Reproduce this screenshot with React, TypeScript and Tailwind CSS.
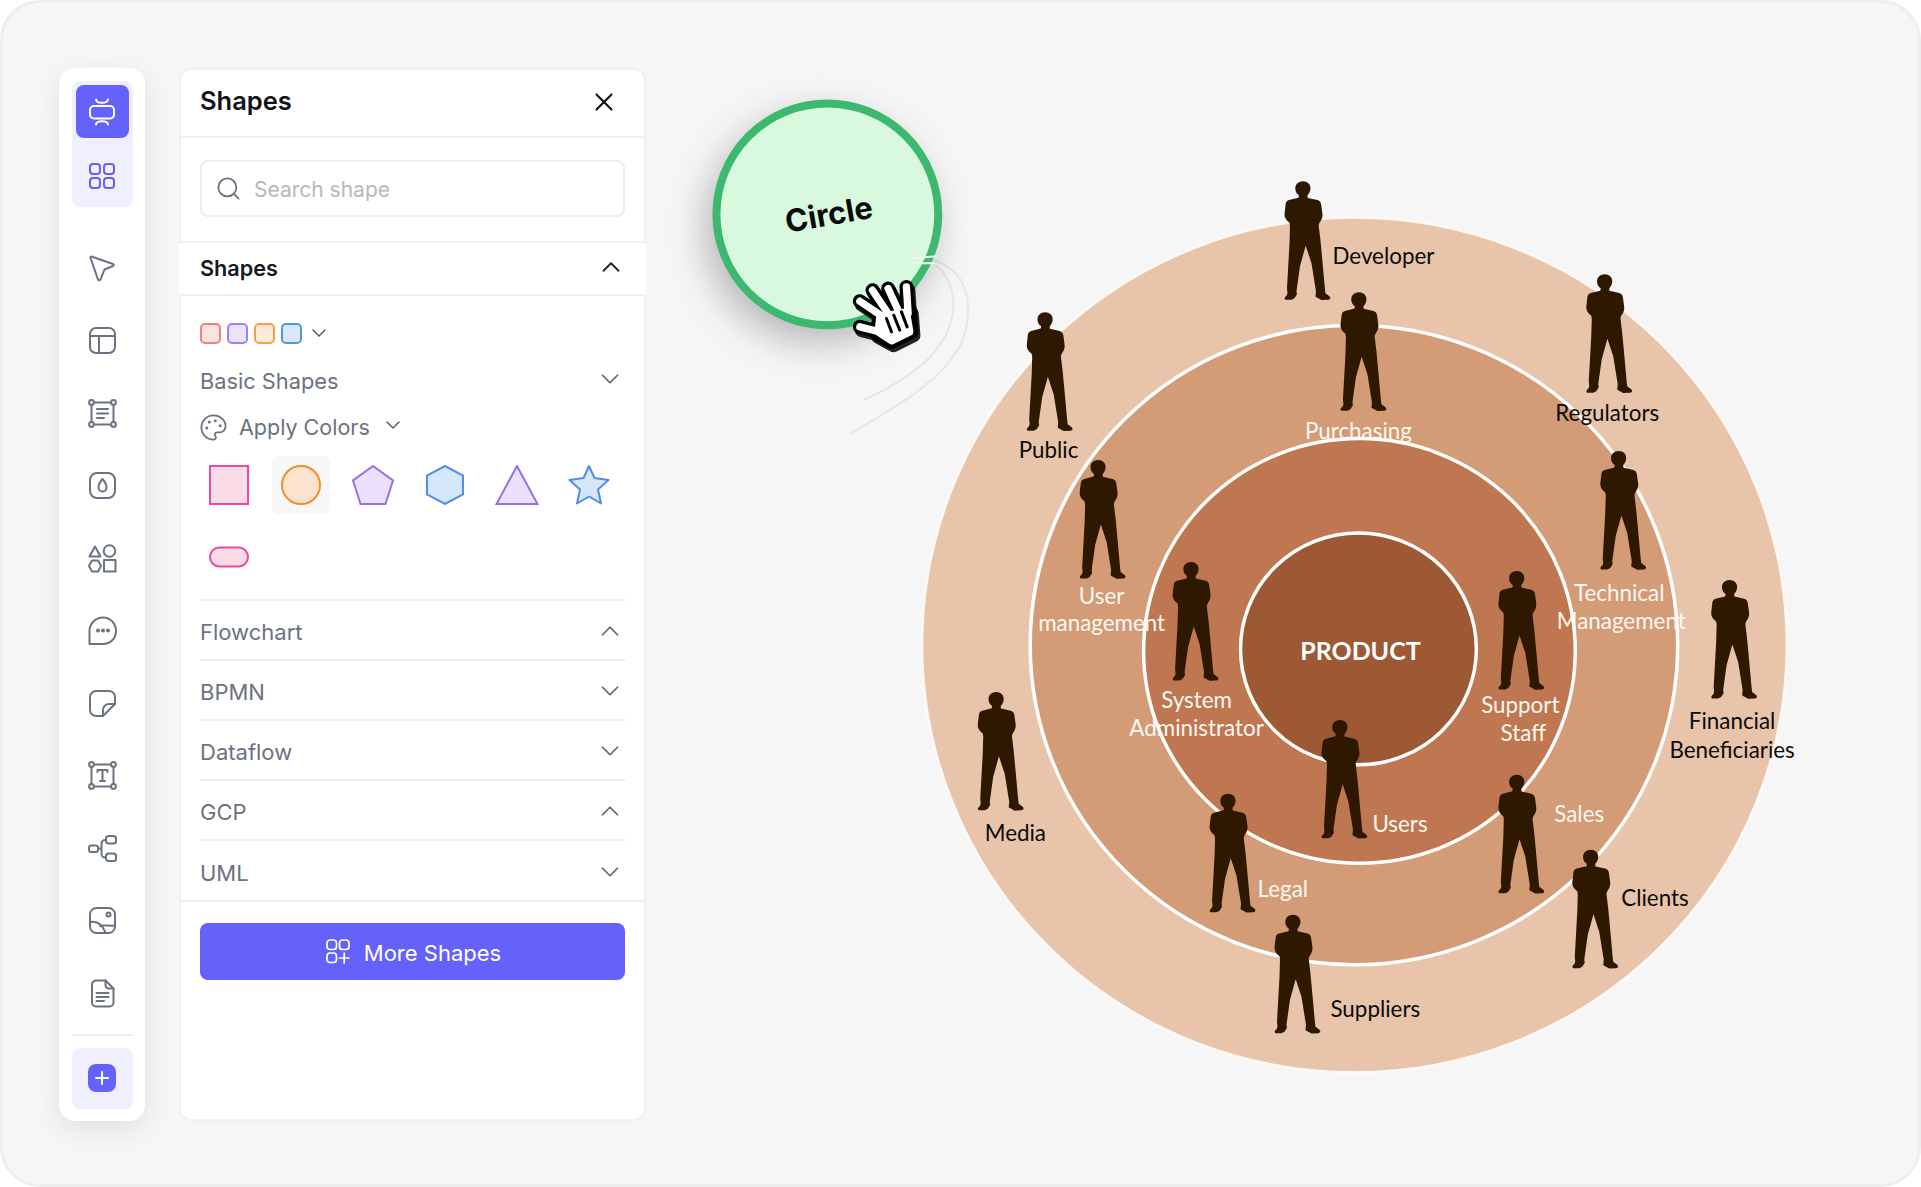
import { ChevronDown, ChevronUp, Palette, Search, X } from "lucide-react";

const PERSON =
  "M18.5 0C23 0 26 3 26 7C26 10 24.5 12.5 23 14L23.2 16.6L33 18.8C35.5 19.4 36.5 21 36.8 24L38 33C38.2 36 37 39 35 41.5L34.2 44L36 59L37.5 75L40.5 108L41 112L45 115C46.5 116.5 46 118 44 118.5L37 118.8L31 115.5L31.5 110L27 82L21.2 64.5L15.5 85L12 110L12.5 113L10 117L7 118.5L1 118.5C-0.5 117.5 0 116 2 114.5L3 112L2.5 107L4 80L5 62L5.5 44.5L5 41.5C1.5 39 0 36 0 33L1 24C1.2 21 2 19.5 4.5 18.8L14 16.4L14.5 14C12 12.5 10.8 10 10.8 7C10.8 3 14 0 18.5 0Z";

const people: [number, number][] = [
  [1284, 181], [1340, 292], [1026, 312], [1079, 460], [1172, 562], [1586, 274], [1600, 451], [1498, 571],
  [1711, 580], [1321, 720], [977, 692], [1209, 794], [1498, 775], [1572, 850], [1274, 915],
];

type Label = { t: string; x: number; y: number; a?: "middle" | "start"; c: string };
const W = "#fdf7f2";
const K = "#0b0b0b";
const labels: Label[] = [
  { t: "Developer", x: 1332, y: 264, c: K },
  { t: "Public", x: 1018, y: 458, c: K },
  { t: "User", x: 1101, y: 604, a: "middle", c: W },
  { t: "management", x: 1101, y: 631, a: "middle", c: W },
  { t: "Regulators", x: 1607, y: 421, a: "middle", c: K },
  { t: "Technical", x: 1619, y: 601, a: "middle", c: W },
  { t: "Management", x: 1621, y: 629, a: "middle", c: W },
  { t: "Support", x: 1520, y: 713, a: "middle", c: W },
  { t: "Staff", x: 1523, y: 741, a: "middle", c: W },
  { t: "Financial", x: 1732, y: 729, a: "middle", c: K },
  { t: "Beneficiaries", x: 1732, y: 758, a: "middle", c: K },
  { t: "System", x: 1196, y: 708, a: "middle", c: W },
  { t: "Administrator", x: 1196, y: 736, a: "middle", c: W },
  { t: "Users", x: 1372, y: 832, c: W },
  { t: "Sales", x: 1554, y: 822, c: W },
  { t: "Legal", x: 1257, y: 897, c: W },
  { t: "Media", x: 984, y: 841, c: K },
  { t: "Clients", x: 1621, y: 906, c: K },
  { t: "Suppliers", x: 1330, y: 1017, c: K },
];

function RailIcon({ children }: { children: React.ReactNode }) {
  return (
    <svg width="29" height="29" viewBox="0 0 29 29" fill="none" stroke="#6b7280" strokeWidth="2" strokeLinecap="round" strokeLinejoin="round">
      {children}
    </svg>
  );
}

const railIcons = [
  <path key="p" d="M3.5 2.5L25 10Q26.5 11 25 12L16.5 15.5L12.5 25.5Q11 27 10 25.5L2.5 4Q2.3 2.5 3.5 2.5Z" />,
  <g key="l"><rect x="2" y="2" width="25" height="25" rx="6" /><path d="M2 10H27M11 10V27" /></g>,
  <g key="f">
    <circle cx="3.5" cy="3.5" r="2.4" /><circle cx="25.5" cy="3.5" r="2.4" /><circle cx="3.5" cy="25.5" r="2.4" /><circle cx="25.5" cy="25.5" r="2.4" />
    <path d="M6 3.5H23M6 25.5H23M3.5 6V23M25.5 6V23M9 10H20M9 14.5H20M9 19H16" />
  </g>,
  <g key="d"><rect x="2" y="2" width="25" height="25" rx="7" /><path d="M14.5 8C11.5 11.5 10.5 13.5 10.5 16.5A4 4 0 0 0 18.5 16.5C18.5 13.5 17.5 11.5 14.5 8Z" /></g>,
  <g key="s">
    <path d="M1.5 12.5H12.5L7 2.5Z" /><circle cx="21.5" cy="7" r="5.8" /><path d="M4 16.5H10L13 22L10 27.5H4L1 22Z" /><rect x="16" y="16" width="11.5" height="11.5" />
  </g>,
  <g key="c">
    <path d="M1.5 28V15C1.5 7.5 7.5 1.5 15 1.5S28 7.5 28 15S22.5 28 15 28Z" />
    <circle cx="10" cy="14.5" r="1" fill="#6b7280" /><circle cx="15" cy="14.5" r="1" fill="#6b7280" /><circle cx="20" cy="14.5" r="1" fill="#6b7280" />
  </g>,
  <g key="n"><path d="M8 2H21A6 6 0 0 1 27 8V15L15 27H8A6 6 0 0 1 2 21V8A6 6 0 0 1 8 2Z" /><path d="M27 15H21A6 6 0 0 0 15 21V27" /></g>,
  <g key="t">
    <circle cx="3.5" cy="3.5" r="2.4" /><circle cx="25.5" cy="3.5" r="2.4" /><circle cx="3.5" cy="25.5" r="2.4" /><circle cx="25.5" cy="25.5" r="2.4" />
    <path d="M6 3.5H23M6 25.5H23M3.5 6V23M25.5 6V23M9.5 11V9H19.5V11M14.5 9V20M12 20H17" />
  </g>,
  <g key="m">
    <rect x="1" y="11.5" width="9" height="6.5" rx="2.2" /><rect x="18" y="2" width="10" height="7.5" rx="2.5" /><rect x="18" y="19.5" width="10" height="7.5" rx="2.5" />
    <path d="M10 14.5H13.5M18 6H17A3.5 3.5 0 0 0 13.5 9.5V20A3.5 3.5 0 0 0 17 23.5H18" />
  </g>,
  <g key="i">
    <rect x="2" y="2" width="25" height="25" rx="6.5" /><circle cx="20.5" cy="8.5" r="2" />
    <path d="M2 16C9 14.5 14.5 19 17.5 26.5M12 20C16 18.5 22 20.5 26.5 19.5" />
  </g>,
  <g key="o">
    <path d="M8 1.5H17.5L25.5 9.5V23.5A4 4 0 0 1 21.5 27.5H8A4 4 0 0 1 4 23.5V5.5A4 4 0 0 1 8 1.5Z" />
    <path d="M17.5 1.5V6A3.5 3.5 0 0 0 21 9.5H25.5M8.5 14H20.5M8.5 18H20.5M8.5 22H16" />
  </g>,
];

const swatches = [
  "border-[#f47f7c] bg-[#fde3e0]",
  "border-[#a07ff2] bg-[#ebe2fe]",
  "border-[#f5a04a] bg-[#fdeada]",
  "border-[#4f94ea] bg-[#d9e9fc]",
];

const rows: [string, boolean][] = [["Flowchart", true], ["BPMN", false], ["Dataflow", false], ["GCP", true], ["UML", false]];

function ShapeCell({ active, children }: { active?: boolean; children: React.ReactNode }) {
  return (
    <div className={`w-[58px] h-[58px] rounded-[6px] flex items-center justify-center ${active ? "bg-[#f7f7f7]" : ""}`}>
      <svg width="44" height="40" viewBox="0 0 44 40" strokeWidth="2">{children}</svg>
    </div>
  );
}

function Diagram() {
  return (
    <svg className="flex-1 h-full" viewBox="645 3 1273 1181" fill="none">
      <ellipse cx="1354" cy="645" rx="433" ry="428" fill="#e8c5aa" stroke="#fdf8f4" strokeWidth="3" />
      <ellipse cx="1353.5" cy="645" rx="324" ry="320" fill="#d49c76" stroke="#fff" strokeWidth="3.5" />
      <text x="1358" y="439" textAnchor="middle" fontFamily="Lato, sans-serif" fontSize="22.4" fill={W}>Purchasing</text>
      <ellipse cx="1359" cy="651" rx="216" ry="212.5" fill="#bf7751" stroke="#fff" strokeWidth="3.5" />
      <ellipse cx="1358" cy="649" rx="118" ry="116" fill="#9c5933" stroke="#fff" strokeWidth="3.5" />
      <text x="1360" y="660" textAnchor="middle" fontFamily="Lato, sans-serif" fontWeight="700" fontSize="25" fill="#fff">PRODUCT</text>
      {labels.map((l) => (
        <text key={l.t} x={l.x} y={l.y} textAnchor={l.a ?? "start"} fontFamily="Lato, sans-serif" fontSize="22.4" fill={l.c}>
          {l.t}
        </text>
      ))}
      {people.map(([x, y]) => (
        <path key={`${x}-${y}`} d={PERSON} transform={`translate(${x} ${y})`} fill="#2e1800" />
      ))}

      <path d="M913 257C950 262 962 300 945 335C930 365 895 385 863 400" stroke="#e6e8e8" strokeWidth="2" />
      <path d="M920 258C965 262 975 300 962 340C945 380 890 410 850 433" stroke="#e6e8e8" strokeWidth="2" />
      <circle cx="826.5" cy="214" r="111" fill="#d9f9de" stroke="#3cb86f" strokeWidth="8" className="drop-shadow-[-8px_14px_18px_rgba(0,0,0,0.25)]" />
      <path d="M911 258L936 256M909 263L934 263" stroke="#eef7ef" strokeWidth="2" />
      <text x="828" y="225" textAnchor="middle" transform="rotate(-10 828 214)" fontFamily="Inter, sans-serif" fontWeight="700" fontSize="31" fill="#0a0a0a">Circle</text>

      <g transform="translate(679 70) scale(0.3333)" strokeLinecap="round" strokeLinejoin="round">
        <g transform="translate(6 10)" stroke="#222" strokeWidth="42">
          <path d="M540 693L610 740M578 660L625 730M625 655L655 720M680 650L685 730M540 770L620 790" />
          <path d="M600 730L690 720L695 785L635 815L590 790Z" fill="#222" />
        </g>
        <g stroke="#000" strokeWidth="42">
          <path d="M540 693L610 740M578 660L625 730M625 655L655 720M680 650L685 730M540 770L620 790" />
          <path d="M600 730L690 720L695 785L635 815L590 790Z" fill="#000" />
        </g>
        <g stroke="#fff" strokeWidth="22">
          <path d="M540 693L610 740M578 660L625 730M625 655L655 720M680 650L685 730M540 770L620 790" />
          <path d="M600 740L680 725L690 785L635 812L595 785Z" fill="#fff" />
        </g>
        <path d="M620 745L635 785M642 735L660 780M665 725L682 770" stroke="#000" strokeWidth="9" />
      </g>
    </svg>
  );
}

export default function App() {
  return (
    <div className="w-[1921px] h-[1187px] bg-white font-[Inter,sans-serif]">
      <div className="w-full h-full flex rounded-[40px] border-[3px] border-[#eceef0] bg-[#f6f6f7] overflow-hidden">
        <div className="flex gap-[34px] pl-[56px] pt-[65px] shrink-0 items-start">
          <aside className="w-[86px] h-[1053px] rounded-[16px] bg-white shadow-[0_8px_28px_rgba(0,0,0,0.09)] flex flex-col items-center pt-[13px]">
            <div className="w-[61px] h-[126px] rounded-[8px] bg-[#f0effe] flex flex-col items-center pt-[4px]">
              <div className="w-[53px] h-[53px] rounded-[8px] bg-[#6562fb] flex items-center justify-center">
                <svg width="28" height="28" viewBox="0 0 28 28" fill="none" stroke="#fff" strokeWidth="2" strokeLinecap="round">
                  <rect x="2" y="8" width="24" height="12.5" rx="4" />
                  <path d="M8 1.5C8.5 4.2 10 4.8 14 4.8S19.5 4.2 20 1.5M8 26.5C8.5 23.8 10 23.2 14 23.2S19.5 23.8 20 26.5" />
                </svg>
              </div>
              <svg className="mt-[25px]" width="26" height="26" viewBox="0 0 26 26" fill="none" stroke="#6c5ef0" strokeWidth="2">
                <rect x="1" y="1" width="10" height="10" rx="3" /><rect x="15" y="1" width="10" height="10" rx="3" />
                <rect x="1" y="15" width="10" height="10" rx="3" /><rect x="15" y="15" width="10" height="10" rx="3" />
              </svg>
            </div>
            <div className="mt-[25px] flex flex-col">
              {railIcons.map((icon, i) => (
                <div key={i} className="h-[72.5px] flex items-center justify-center">
                  <RailIcon>{icon}</RailIcon>
                </div>
              ))}
            </div>
            <div className="mt-[4px] w-[61px] h-[2px] bg-[#eceef0]" />
            <div className="mt-[12px] w-[61px] h-[61px] rounded-[8px] bg-[#f0effe] flex items-center justify-center">
              <div className="w-[28px] h-[28px] rounded-[8px] bg-[#6562fb] flex items-center justify-center">
                <svg width="16" height="16" viewBox="0 0 16 16" fill="none" stroke="#fff" strokeWidth="2" strokeLinecap="round">
                  <path d="M8 2V14M2 8H14" />
                </svg>
              </div>
            </div>
          </aside>

          <section className="w-[467px] h-[1053px] rounded-[12px] bg-white border-2 border-[#eef0f1] flex flex-col">
            <header className="h-[68px] flex items-center justify-between pl-[19px] pr-[24px] border-b-2 border-[#eef0f2]">
              <h2 className="text-[25.5px] leading-none font-semibold text-[#111318] -mt-[4px]">Shapes</h2>
              <X size={30} strokeWidth={1.7} className="text-[#111318] -mt-[2px] mr-[1px]" />
            </header>
            <div className="h-[103px] pt-[22px] px-[19px]">
              <div className="h-[57px] rounded-[8px] border-2 border-[#eceef1] flex items-center pl-[13px]">
                <Search size={27} strokeWidth={1.6} className="text-[#6b7280]" />
                <span className="ml-[12px] mt-[1px] text-[21px] text-[#b5b9c0] leading-none">Search shape</span>
              </div>
            </div>
            <div className="h-[55px] -mx-[2px] bg-white border-y-2 border-[#eff1f2] flex items-center justify-between pl-[21px] pr-[20px]">
              <span className="text-[21.6px] font-semibold text-[#16181d]">Shapes</span>
              <ChevronUp size={30} strokeWidth={1.5} className="text-[#20242b] -mt-[3px]" />
            </div>
            <div className="px-[19px] pt-[27px]">
              <div className="flex items-center h-[21px] gap-[6px]">
                {swatches.map((s) => (
                  <div key={s} className={`w-[21px] h-[21px] rounded-[5px] border-2 ${s}`} />
                ))}
                <ChevronDown size={24} strokeWidth={1.6} className="text-[#5d6570] -ml-[1px] -mt-[1px]" />
              </div>
              <div className="mt-[17px] h-[40px] flex items-center justify-between">
                <span className="text-[21.8px] text-[#6b7280]">Basic Shapes</span>
                <ChevronDown size={30} strokeWidth={1.4} className="text-[#5d6570] -mt-[5px]" />
              </div>
              <div className="mt-[6px] h-[40px] flex items-center">
                <Palette size={29} strokeWidth={1.5} className="text-[#6b7280] -ml-[1px]" />
                <span className="ml-[11px] text-[21.5px] text-[#6b7280]">Apply Colors</span>
                <ChevronDown size={24} strokeWidth={1.6} className="text-[#5d6570] ml-[11px] -mt-[4px]" />
              </div>
              <div className="mt-[9px] grid grid-cols-[repeat(6,58px)] gap-x-[14px] gap-y-[14px]">
                <ShapeCell><rect x="3" y="1" width="38" height="38" fill="#fadbe8" stroke="#ec4a9e" /></ShapeCell>
                <ShapeCell active><circle cx="22" cy="20" r="19" fill="#fbe3cf" stroke="#f18e2a" /></ShapeCell>
                <ShapeCell><path d="M22 1L42 15.5L34.5 39H9.5L2 15.5Z" fill="#ebe0fd" stroke="#9272ea" /></ShapeCell>
                <ShapeCell><path d="M22 1L40 10.5V29.5L22 39L4 29.5V10.5Z" fill="#d6e6fb" stroke="#4f90e6" /></ShapeCell>
                <ShapeCell><path d="M22 1L42.5 39H1.5Z" fill="#ebe0fd" stroke="#9272ea" /></ShapeCell>
                <ShapeCell><path d="M22 1L27.5 13L41.5 15L31 24.5L34 38.5L22 31.5L10 38.5L13 24.5L2.5 15L16.5 13Z" fill="#d6e6f6" stroke="#4f90e6" strokeLinejoin="round" /></ShapeCell>
                <ShapeCell><rect x="3" y="10.5" width="38" height="19" rx="9.5" fill="#fadbe8" stroke="#ec4a9e" /></ShapeCell>
              </div>
            </div>
            <div className="mx-[19px] mt-[13px] border-t-2 border-[#eceef0]">
              {rows.map(([name, up], i) => (
                <div key={name} className={`flex items-center justify-between ${i < 4 ? "h-[60px] border-b-2 border-[#eceef0]" : "h-[59px]"}`}>
                  <span className="text-[22px] text-[#6b7280] pt-[5px]">{name}</span>
                  {up ? (
                    <ChevronUp size={30} strokeWidth={1.4} className="text-[#5d6570] mt-[2px]" />
                  ) : (
                    <ChevronDown size={30} strokeWidth={1.4} className="text-[#5d6570] mt-[2px]" />
                  )}
                </div>
              ))}
            </div>
            <div className="h-[2px] bg-[#eceef0]" />
            <div className="px-[19px] pt-[21px]">
              <button className="w-full h-[57px] rounded-[8px] bg-[#6562fb] flex items-center justify-center gap-[14px] text-white text-[22px]">
                <svg width="24" height="25" viewBox="0 0 24 25" fill="none" stroke="#fff" strokeWidth="1.7" strokeLinecap="round" className="ml-[2px]">
                  <rect x="1" y="1" width="9.5" height="9.5" rx="3" /><rect x="13.5" y="1" width="9.5" height="9.5" rx="3" />
                  <rect x="1" y="14" width="9.5" height="9.5" rx="3" /><path d="M18.2 14V24M13.5 19H23" />
                </svg>
                <span className="pt-[3px]">More Shapes</span>
              </button>
            </div>
          </section>
        </div>
        <Diagram />
      </div>
    </div>
  );
}
